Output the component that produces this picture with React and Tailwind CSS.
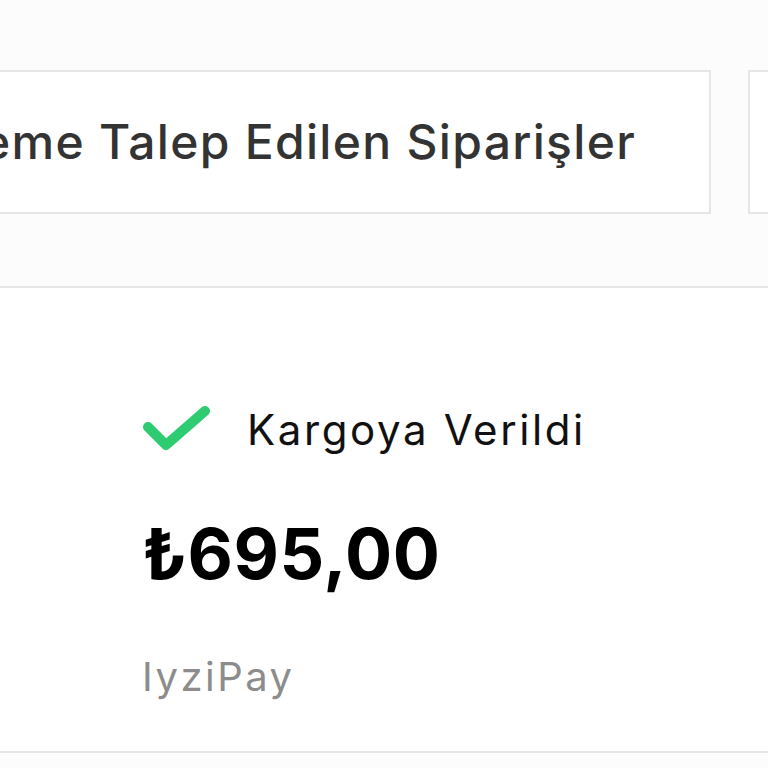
import React from 'react';

function CheckMark() {
  return (
    <svg width="70" height="50" viewBox="0 0 70 50" className="shrink-0">
      <path d="M6 22 L24 40 L63 6" fill="none" stroke="#2ecc71" strokeWidth="10" strokeLinecap="round" strokeLinejoin="round" />
    </svg>
  );
}

export default function App() {
  return (
    <div className="min-h-screen bg-[#fcfcfc] overflow-hidden font-['Inter','Noto_Sans',sans-serif]">
      <div className="pt-[70px] flex gap-[37px] ml-[-400px]">
        <div className="w-[1111px] h-[144px] shrink-0 bg-white border-2 border-[#e6e6e6] flex items-center justify-end pr-[73px]">
          <span className="text-[48px] font-medium text-[#333] whitespace-nowrap leading-none tracking-[1.3px]">Ödeme Talep Edilen Siparişler</span>
        </div>
        <div className="w-[300px] h-[144px] shrink-0 bg-white border-2 border-[#e6e6e6]" />
      </div>

      <div className="mt-[72px] bg-white border-t-2 border-b-2 border-[#e6e6e6] h-[467px] pl-[142px] pt-[117px]">
        <div className="flex items-center gap-[35px] h-[50px]">
          <CheckMark />
          <span className="text-[42px] text-[#111] leading-none tracking-[2.6px]">Kargoya Verildi</span>
        </div>
        <div className="mt-[64px] text-[70px] font-bold text-black leading-none tracking-[0.5px]">₺695,00</div>
        <div className="mt-[68px] text-[40px] text-[#8c8c8c] leading-none tracking-[2.5px]">IyziPay</div>
      </div>
    </div>
  );
}
